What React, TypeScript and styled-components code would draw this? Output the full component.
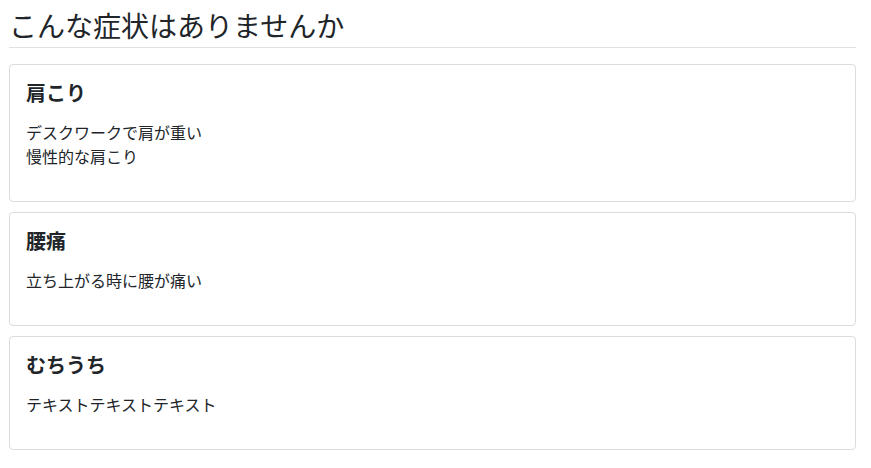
import React from "react";
import styled, { createGlobalStyle } from "styled-components";

const Global = createGlobalStyle`
  html, body { margin: 0; padding: 0; background: #fff; }
  body { font-family: "Noto Sans CJK JP", "Noto Sans", sans-serif; color: #212529; }
`;

const Page = styled.div`
  padding: 7px 15px 0 9px;
`;

const Heading = styled.h2`
  margin: 0 0 16px;
  padding: 0 0 4px;
  font-size: 28px;
  font-weight: 400;
  line-height: 1.3;
  border-bottom: 1px solid #dee2e6;
`;

const List = styled.div`
  display: flex;
  flex-direction: column;
  gap: 10px;
`;

const Card = styled.section`
  border: 1px solid #dcdcdc;
  border-radius: 4px;
  padding: 16px 16px 17px;
`;

const Title = styled.h3`
  margin: 0 0 15px;
  font-size: 20px;
  font-weight: 700;
  line-height: 1.2;
`;

const Body = styled.p`
  margin: 0 0 16px;
  font-size: 16px;
  line-height: 1.5;
`;

const items = [
  { title: "肩こり", lines: ["デスクワークで肩が重い", "慢性的な肩こり"] },
  { title: "腰痛", lines: ["立ち上がる時に腰が痛い"] },
  { title: "むちうち", lines: ["テキストテキストテキスト"] },
];

export default function App() {
  return (
    <Page>
      <Global />
      <Heading>こんな症状はありませんか</Heading>
      <List>
        {items.map((it) => (
          <Card key={it.title}>
            <Title>{it.title}</Title>
            <Body>
              {it.lines.map((l, i) => (
                <React.Fragment key={i}>
                  {i > 0 && <br />}
                  {l}
                </React.Fragment>
              ))}
            </Body>
          </Card>
        ))}
      </List>
    </Page>
  );
}
